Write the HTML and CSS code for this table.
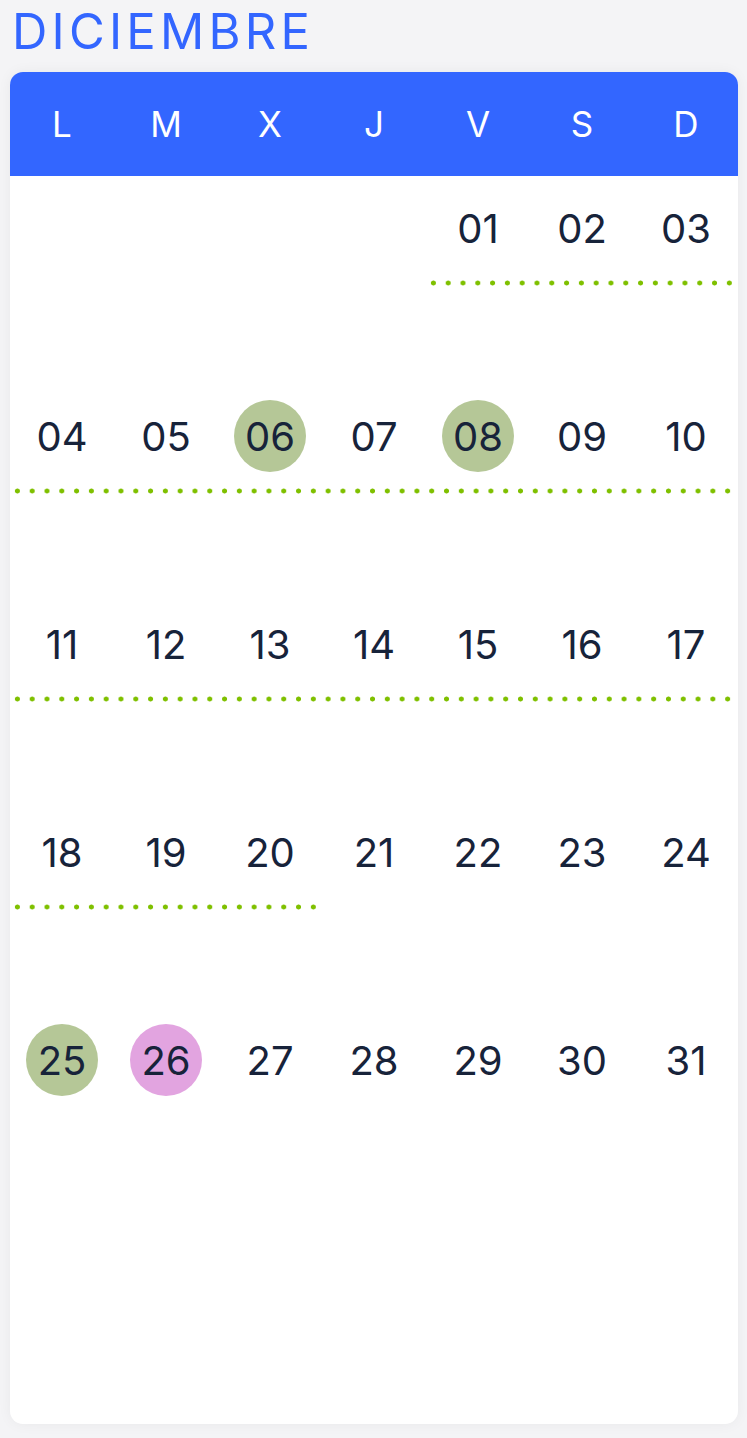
FILE: index.html
```html
<!DOCTYPE html>
<html lang="es">
<head>
<meta charset="utf-8">
<title>Diciembre</title>
<link rel="stylesheet" href="styles.css">
</head>
<body>
<div class="page">
  <h1 class="title">DICIEMBRE</h1>
  <div class="card">
    <div class="head">
      <div>L</div><div>M</div><div>X</div><div>J</div><div>V</div><div>S</div><div>D</div>
    </div>
    <div class="week">
      <div class="day"></div><div class="day"></div><div class="day"></div><div class="day"></div>
      <div class="day"><span>01</span></div><div class="day"><span>02</span></div><div class="day"><span>03</span></div>
      <div class="dots" style="grid-column: 5 / 8"></div>
    </div>
    <div class="week">
      <div class="day"><span>04</span></div><div class="day"><span>05</span></div><div class="day"><span class="mark green">06</span></div><div class="day"><span>07</span></div>
      <div class="day"><span class="mark green">08</span></div><div class="day"><span>09</span></div><div class="day"><span>10</span></div>
      <div class="dots" style="grid-column: 1 / 8"></div>
    </div>
    <div class="week">
      <div class="day"><span>11</span></div><div class="day"><span>12</span></div><div class="day"><span>13</span></div><div class="day"><span>14</span></div>
      <div class="day"><span>15</span></div><div class="day"><span>16</span></div><div class="day"><span>17</span></div>
      <div class="dots" style="grid-column: 1 / 8"></div>
    </div>
    <div class="week">
      <div class="day"><span>18</span></div><div class="day"><span>19</span></div><div class="day"><span>20</span></div><div class="day"><span>21</span></div>
      <div class="day"><span>22</span></div><div class="day"><span>23</span></div><div class="day"><span>24</span></div>
      <div class="dots" style="grid-column: 1 / 4"></div>
    </div>
    <div class="week">
      <div class="day"><span class="mark green">25</span></div><div class="day"><span class="mark pink">26</span></div><div class="day"><span>27</span></div><div class="day"><span>28</span></div>
      <div class="day"><span>29</span></div><div class="day"><span>30</span></div><div class="day"><span>31</span></div>
    </div>
    <div class="week"></div>
  </div>
</div>
</body>
</html>
```
FILE: styles.css
```css
html, body {
  margin: 0;
  padding: 0;
}
body {
  background: #f4f4f6;
  font-family: Inter, "Noto Sans", sans-serif;
  width: 747px;
  height: 1438px;
  overflow: hidden;
}
.page {
  padding: 0 9px 0 10px;
}
.title {
  margin: 0;
  height: 72px;
  padding-left: 2px;
  font-size: 49px;
  font-weight: 400;
  line-height: 64px;
  color: #3366ff;
  letter-spacing: 4.2px;
}
.card {
  background: #ffffff;
  border-radius: 13px;
  overflow: hidden;
  box-shadow: 0 0 14px rgba(0, 0, 0, 0.05);
}
.head {
  display: grid;
  grid-template-columns: repeat(7, 104px);
  height: 104px;
  background: #3366ff;
  color: #ffffff;
  font-size: 35px;
}
.head div {
  display: flex;
  align-items: center;
  justify-content: center;
}
.week {
  display: grid;
  grid-template-columns: repeat(7, 104px);
  grid-template-rows: 104px 6px 98px;
  height: 208px;
}
.day {
  grid-row: 1;
  display: flex;
  align-items: center;
  justify-content: center;
  font-size: 40px;
  color: #17233a;
}
.day span {
  display: flex;
  align-items: center;
  justify-content: center;
  width: 72px;
  height: 72px;
  border-radius: 50%;
}
.mark.green {
  background: #b5c797;
}
.mark.pink {
  background: #e2a4e0;
}
.dots {
  grid-row: 2;
  background: radial-gradient(circle, #7fc000 2.2px, rgba(127, 192, 0, 0) 2.8px) 0 0 / 14.8px 6px repeat-x;
}
```
